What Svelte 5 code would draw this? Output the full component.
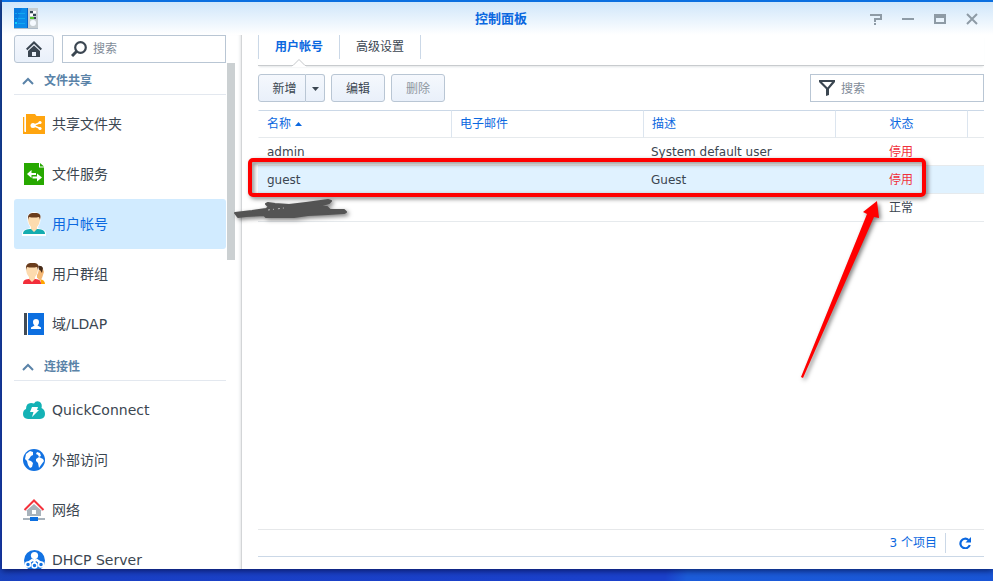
<script lang="ts">
	interface NavItem {
		id: string;
		label: string;
	}

	interface NavGroup {
		title: string;
		items: NavItem[];
	}

	interface User {
		name: string;
		email: string;
		description: string;
		disabled: boolean;
	}

	const groups: NavGroup[] = [
		{
			title: '文件共享',
			items: [
				{ id: 'share', label: '共享文件夹' },
				{ id: 'fileservice', label: '文件服务' },
				{ id: 'user', label: '用户帐号' },
				{ id: 'group', label: '用户群组' },
				{ id: 'ldap', label: '域/LDAP' }
			]
		},
		{
			title: '连接性',
			items: [
				{ id: 'quickconnect', label: 'QuickConnect' },
				{ id: 'external', label: '外部访问' },
				{ id: 'network', label: '网络' },
				{ id: 'dhcp', label: 'DHCP Server' }
			]
		}
	];

	const users: User[] = [
		{ name: 'admin', email: '', description: 'System default user', disabled: true },
		{ name: 'guest', email: '', description: 'Guest', disabled: true },
		{ name: '', email: '', description: '', disabled: false }
	];

	const tabs = ['用户帐号', '高级设置'];

	let activeItem = $state('user');
	let activeTab = $state(0);
	let selected = $state(1);
</script>

{#snippet navIcon(id: string)}
	<svg class="nav-icon" width="24" height="24" viewBox="0 0 24 24" aria-hidden="true">
		{#if id === 'share'}
			<path fill="#ffa510" d="M1 5h1.500v15H4V2h9l1.500 2H23v18H1z" />
			<path fill="#fff" d="M2.500 5H4v14H2.500z" />
			<path stroke="#fff" stroke-width="1.600" fill="none" d="M18.500 10.500 11 13.500l7.500 3" />
			<circle cx="18" cy="10.500" r="1.600" fill="#fff" />
			<circle cx="11" cy="13.500" r="2.500" fill="#fff" />
			<circle cx="18" cy="16.500" r="1.600" fill="#fff" />
		{:else if id === 'fileservice'}
			<path fill="#27a800" d="M2 1h15v4.500h5V23H2zM18 1l4 3.500h-4z" />
			<path fill="#fff" d="M9.500 8v3H14v2H9.500v3L5 12zM15 11.500l5 4-5 4v-3h-4.500v-2H15z" />
		{:else if id === 'user'}
			<path fill="#fff" d="M5 6Q6 0 12 0t7 6l-1 5-2 4v1l6 2 2 2v4H0v-4l2-2 6-2v-1l-2-4z" />
			<path fill="#14acb0" d="M1 22c0-3 2-4.500 7-5h8c5 .5 7 2 7 5z" />
			<path fill="#fddbae" d="M7 5q5-3 10 0l1 3-1 4-2 3v2l-3 3-3-3v-2l-2-3-1-4z" />
			<path fill="#6a3c1c" d="M6 8q-1-6 4-7h5q5 1 3 7l-1-3q-5 1-10 0z" />
		{:else if id === 'group'}
			<path fill="#ffa500" d="M16 22h7q0-4-5-5z" />
			<path fill="#f5b874" d="M15 7h6l1 3-2 6-2 3-3-3z" />
			<path fill="#472b18" d="M15 4q5-1 6 2l-1 5-2-3-3-1z" />
			<path fill="#fff" d="M3 6Q4 0 10 0t7 7l-1 4-2 4 5 4v4H0v-5l6-3-2-4z" />
			<path fill="#f22e3a" d="M1 22c0-3 1-4.500 6-5h6c5 .5 6 2 6 5z" />
			<path fill="#fddbae" d="M5 5q5-3 10 0l1 3-1 4-2 3v2l-3 3-3-3v-2l-2-3-1-4z" />
			<path fill="#6a3c1c" d="M4 8Q3 2 8 1h5q5 1 3 7l-1-3Q10 6 5 5z" />
		{:else if id === 'ldap'}
			<path fill="#414b55" d="M2 1h3v22H2z" />
			<path fill="#0d6fe0" d="M6 1h16v22H6z" />
			<path fill="#fff" d="M14 7q3 0 3 3t-1.500 3.500l3.500 2V17H9v-1.500l3.500-2Q11 13 11 10t3-3z" />
		{:else if id === 'quickconnect'}
			<path fill="#14b2b5" d="M6 21q-5-.5-5-5 0-4 3-5 0-6 5-6 2 0 3 .5Q14 2 18 4q2.500 2 1.500 6 3.500 1.500 3.500 6 0 4.500-5 5z" />
			<path fill="#fff" d="M10 9h6l-1 3h2l-7 7 1.500-5H8z" />
		{:else if id === 'external'}
			<circle cx="12" cy="12" r="11" fill="#1272e2" />
			<path
				fill="#fff"
				d="m4 6 4-3 3 1v3L9 8l-2 3-1 1 3 1 2 2-1 4-2 1-2-3-1-4-2-2zM15 4l3 1 1 3-2 1-1-2-2-1zM14 11l3-2 4 2 1 2-3 4-2 3-1-5-2-2z"
			/>
		{:else if id === 'network'}
			<path fill="#a8b2bb" d="m12 6 8 7h-1v5H5v-5H4zM1 20h22v2H1z" />
			<path fill="none" stroke="#f4313b" stroke-width="2" d="M2.500 12 12 2.500l9.500 9.500" />
			<path fill="#fff" d="M10 12h4v4h-4z" />
			<path fill="#0d6fe0" d="M8 19h8v4H8z" />
		{:else}
			<circle cx="12.500" cy="12.500" r="10.500" fill="#1272e2" />
			<circle cx="12.500" cy="7.500" r="3.600" fill="#fff" />
			<path fill="none" stroke="#fff" stroke-width="2.500" d="M12.500 9v6M11 11.500l-5 3.500m8-3.500 5 3.500" />
			<g fill="#1272e2" stroke="#fff" stroke-width="1.500">
				<circle cx="6" cy="16.500" r="2.500" />
				<circle cx="12.500" cy="17.500" r="2.500" />
				<circle cx="19" cy="16.500" r="2.500" />
			</g>
		{/if}
	</svg>
{/snippet}

<div class="desktop">
	<div class="window">
		<header class="titlebar">
			<svg width="24" height="22" viewBox="0 0 24 22" aria-hidden="true">
				<path fill="#0b2f50" opacity=".3" d="M0 20h24v1H0z" />
				<path fill="#087be0" d="M0 0h14v20H0z" />
				<path fill="#0b8be9" d="M8 0h6v20H0z" />
				<path fill="#075fc6" d="M13 0h1v20h-1z" />
				<path fill="#c6ced2" d="M14 0h10v20H14z" />
				<path stroke="#13a8f0" d="M1 5.500h2m1 0h7M1 10.500h2m1 0h7M4 15.500h7" />
				<path fill="#12d2fa" d="M1 14h2v2H1z" />
				<path fill="#364755" d="M16 3h3v2h-3zm3 3h3v2h-3zm-3 3h0z" />
				<path fill="#fff" d="M19 3h3v2h-3zm-3 3h3v2h-3z" />
				<path fill="#52c52a" d="M16 9h4v2h-4z" />
				<path fill="#364755" d="M20 9h2v2h-2z" />
				<circle cx="19" cy="15" r="3" fill="#f5faff" />
			</svg>
			<h1>控制面板</h1>
			<div class="controls">
				<button aria-label="帮助">
					<svg width="12" height="12" viewBox="0 0 12 12"><path fill="none" stroke="#8e9ba6" stroke-width="2" d="M1 3V2h10v4H5v3m0 1v2" /></svg>
				</button>
				<button aria-label="最小化">
					<svg width="12" height="12" viewBox="0 0 12 12"><path fill="#8e9ba6" d="M0 5h12v2H0z" /></svg>
				</button>
				<button aria-label="最大化">
					<svg width="12" height="12" viewBox="0 0 12 12"><path fill="#8e9ba6" fill-rule="evenodd" d="M0 1h12v10H0zm2 4v4h8V5z" /></svg>
				</button>
				<button aria-label="关闭">
					<svg width="12" height="12" viewBox="0 0 12 12"><path stroke="#8e9ba6" stroke-width="2" d="m1 1 10 10M11 1 1 11" /></svg>
				</button>
			</div>
		</header>

		<div class="body">
			<aside class="sidebar">
				<div class="side-tools">
					<button class="btn home" aria-label="主页">
						<svg width="16" height="16" viewBox="0 0 16 16">
							<path fill="none" stroke="#3b4651" stroke-width="2" d="M.7 8.500 8 1.500l7.300 7" />
							<path fill="#3b4651" fill-rule="evenodd" d="m8 4.500 6 5.500v6H2v-6zM6 11v4h4v-4z" />
						</svg>
					</button>
					<label class="field">
						<svg width="16" height="16" viewBox="0 0 16 16" aria-hidden="true">
							<circle cx="9.500" cy="6.500" r="5.300" fill="none" stroke="#3b4651" stroke-width="2.200" />
							<path stroke="#3b4651" stroke-width="3" d="m5.500 10.500-4.500 4.500" />
						</svg>
						<input type="text" placeholder="搜索" aria-label="搜索设置" />
					</label>
				</div>
				<div class="side-scroll">
					<nav>
						{#each groups as group (group.title)}
							<h2>
								<svg width="12" height="8" viewBox="0 0 12 8" aria-hidden="true">
									<path fill="none" stroke="#5a83a8" stroke-width="2" d="m1 7 5-5 5 5" />
								</svg>
								{group.title}
							</h2>
							<ul>
								{#each group.items as item (item.id)}
									<li>
										<button
											class="nav-item"
											class:active={activeItem === item.id}
											onclick={() => (activeItem = item.id)}
										>
											{@render navIcon(item.id)}
											{item.label}
										</button>
									</li>
								{/each}
							</ul>
						{/each}
					</nav>
					<div class="track"><div class="thumb"></div></div>
				</div>
			</aside>

			<main>
				<div class="tabs" role="tablist">
					{#each tabs as tab, i (tab)}
						<button
							role="tab"
							aria-selected={activeTab === i}
							class:active={activeTab === i}
							onclick={() => (activeTab = i)}
						>
							{tab}
							{#if activeTab === i}
								<svg class="notch" width="14" height="8" viewBox="0 0 14 8" aria-hidden="true">
									<path fill="#fff" d="M0 8V7l7-6 7 6v1z" />
									<path fill="none" stroke="#c4c7ca" d="M0 6.500h1l6-6 6 6h1" />
								</svg>
							{/if}
						</button>
					{/each}
				</div>

				<div class="toolbar">
					<div class="split">
						<button class="btn">新增</button>
						<button class="btn arrow" aria-label="更多">
							<svg width="7" height="4" viewBox="0 0 7 4"><path fill="#3b4651" d="M0 0h7L3.500 4z" /></svg>
						</button>
					</div>
					<button class="btn">编辑</button>
					<button class="btn" disabled>删除</button>
					<label class="field filter">
						<svg width="16" height="16" viewBox="0 0 16 16" aria-hidden="true">
							<path fill="#3b4651" fill-rule="evenodd" d="M0 0h16v2L10 9v6l-3 1V9L0 2zm3 2 5.500 5.500L13 2z" />
						</svg>
						<input type="text" placeholder="搜索" aria-label="搜索用户" />
					</label>
				</div>

				<div class="grid">
					<table>
						<colgroup>
							<col class="c-name" />
							<col class="c-text" />
							<col />
							<col class="c-status" />
							<col class="c-end" />
						</colgroup>
						<thead>
							<tr>
								<th>
									名称
									<svg width="7" height="4" viewBox="0 0 7 4" aria-hidden="true"><path fill="#0b68e0" d="M0 4h7L3.500 0z" /></svg>
								</th>
								<th>电子邮件</th>
								<th>描述</th>
								<th class="status">状态</th>
								<th></th>
							</tr>
						</thead>
						<tbody>
							{#each users as user, i (i)}
								<tr class:selected={selected === i} onclick={() => (selected = i)}>
									<td>{user.name}</td>
									<td>{user.email}</td>
									<td>{user.description}</td>
									<td class="status" class:disabled={user.disabled}>{user.disabled ? '停用' : '正常'}</td>
									<td></td>
								</tr>
							{/each}
						</tbody>
					</table>
				</div>

				<footer>
					<span>{users.length} 个项目</span>
					<button aria-label="刷新">
						<svg width="12" height="12" viewBox="0 0 12 12">
							<path fill="none" stroke="#0b68e0" stroke-width="2.200" d="M9.500 3A4.800 4.800 0 1 0 10.800 8" />
							<path fill="#0b68e0" d="M12 0v5.500H6.500z" />
						</svg>
					</button>
				</footer>
			</main>
		</div>
	</div>

	<!-- Markup drawn over the window: scribble, frame and arrow -->
	<svg class="marks" aria-hidden="true">
		<path
			fill="#545454"
			stroke="#545454"
			stroke-width="2"
			stroke-linejoin="round"
			d="m235 213 17-2 14-2 3-2-3-3 2-1 7 1 14 1 17-2 22-3 3 1-2 2-10 3 8 1 3 3h14l2 2-2 1-16 1-20 1-14 2h-28l-2-2-18 1-8 1z"
		/>
		<path stroke="#bbb" stroke-dasharray="2 3 1 4" d="m268 210 16-2" />
		<rect x="250" y="160" width="674" height="35" rx="3" fill="none" stroke="#f00" stroke-width="4" />
		<path fill="#f00" d="m877 201-14 11 4 2-66 163 2 1 71-161 5 1z" />
	</svg>
</div>

<style>
	:global(body) {
		margin: 0;
	}

	.desktop {
		position: relative;
		box-sizing: border-box;
		height: 100vh;
		padding: 0 0 12px 2px;
		overflow: hidden;
		background: linear-gradient(100deg, #174a9f 0%, #1a40c4 12%, #1b41cc 70%, #1c5cda 72%, #1955d6 100%);
		color: #3b4651;
		font: 12px/18px 'DejaVu Sans', 'Noto Sans CJK SC', sans-serif;
	}

	.window {
		display: flex;
		flex-direction: column;
		box-sizing: border-box;
		height: 100%;
		border-top: 2px solid #0b6fe0;
		background: #fff;
		box-shadow: 0 2px 6px rgba(0, 0, 40, 0.6);
	}

	button {
		padding: 0;
		border: 0;
		background: none;
		color: inherit;
		font: inherit;
		cursor: pointer;
	}

	svg {
		flex: none;
	}

	.titlebar {
		display: grid;
		grid-template-columns: 1fr auto 1fr;
		align-items: center;
		flex: none;
		height: 33px;
		padding: 0 5px 0 12px;
		background: linear-gradient(#cfe6fa, #fff);
	}

	h1 {
		margin: 0;
		color: #0b68e0;
		font-size: 13px;
		font-weight: bold;
	}

	.controls {
		display: flex;
		justify-content: flex-end;
	}

	.controls button {
		display: grid;
		place-items: center;
		width: 32px;
		height: 24px;
	}

	.body {
		display: flex;
		flex: 1;
		min-height: 0;
	}

	.sidebar {
		display: flex;
		flex-direction: column;
		flex: none;
		box-sizing: border-box;
		width: 240px;
		padding: 0 6px 0 12px;
		border-right: 1px solid #d3d5d7;
		box-shadow: inset -3px 0 3px -2px #e3e5e7;
	}

	.side-tools {
		display: flex;
		gap: 8px;
		padding-right: 9px;
	}

	.btn {
		box-sizing: border-box;
		height: 28px;
		min-width: 54px;
		border: 1px solid #b9c6d4;
		border-radius: 3px;
		background: linear-gradient(#f5f8fd, #e9f0fa);
	}

	.btn:disabled {
		color: #8d969f;
	}

	.home {
		display: grid;
		place-items: center;
		min-width: 40px;
	}

	.field {
		display: flex;
		align-items: center;
		flex: 1;
		gap: 6px;
		box-sizing: border-box;
		min-width: 0;
		height: 28px;
		padding: 0 8px;
		border: 1px solid #b9c6d4;
		background: #fff;
	}

	.field input {
		flex: 1;
		min-width: 0;
		padding: 0;
		border: 0;
		outline: 0;
		background: none;
		color: inherit;
		font: inherit;
	}

	.field input::placeholder {
		color: #7f8b98;
		opacity: 1;
	}

	.side-scroll {
		display: flex;
		flex: 1;
		gap: 1px;
		min-height: 0;
	}

	nav {
		flex: 1;
		overflow: hidden;
	}

	h2 {
		display: flex;
		align-items: center;
		gap: 10px;
		box-sizing: border-box;
		height: 32px;
		margin: 0 0 4px;
		padding: 5px 8px 0;
		border-bottom: 1px solid #e3e8ef;
		color: #5a83a8;
		font-size: 12px;
		font-weight: bold;
	}

	ul {
		margin: 0;
		padding: 0;
		list-style: none;
	}

	.nav-item {
		display: flex;
		align-items: center;
		gap: 6px;
		width: 100%;
		height: 50px;
		padding: 0 8px;
		border-radius: 3px;
		font-size: 14px;
		text-align: left;
	}

	.nav-item.active {
		background: #d1ebff;
		color: #0b68e0;
	}

	.track {
		width: 8px;
	}

	.thumb {
		height: 39%;
		background: #cbd0d2;
	}

	main {
		display: flex;
		flex-direction: column;
		flex: 1;
		min-width: 0;
		padding: 0 9px 12px 16px;
	}

	.tabs {
		display: flex;
		flex: none;
		margin-bottom: 8px;
		padding-bottom: 6px;
		border-bottom: 1px solid #c8cbce;
		box-shadow: 0 2px 2px -1px #e4e6e8;
	}

	.tabs button {
		position: relative;
		height: 24px;
		padding: 0 16px;
		border-right: 1px solid #cbd8e7;
	}

	.tabs button:first-child {
		border-left: 1px solid #cbd8e7;
	}

	.tabs .active {
		color: #0b68e0;
		font-weight: bold;
	}

	.notch {
		position: absolute;
		top: 24px;
		left: calc(50% - 7px);
	}

	.toolbar {
		display: flex;
		flex: none;
		gap: 6px;
		margin-bottom: 8px;
	}

	.toolbar .btn,
	.toolbar input {
		padding-top: 2px;
	}

	.split {
		display: flex;
	}

	.split .btn:first-child {
		min-width: 48px;
		padding-left: 5px;
		border-radius: 3px 0 0 3px;
	}

	.split .arrow {
		display: grid;
		place-items: center;
		min-width: 19px;
		border-left: 0;
		border-radius: 0 3px 3px 0;
	}

	.filter {
		flex: 0 0 174px;
		margin-left: auto;
	}

	.grid {
		flex: 1;
		min-height: 0;
		overflow: hidden;
	}

	table {
		width: 100%;
		border-collapse: separate;
		border-spacing: 0;
		table-layout: fixed;
	}

	.c-name {
		width: 193px;
	}

	.c-text {
		width: 192px;
	}

	.c-status {
		width: 132px;
	}

	.c-end {
		width: 17px;
	}

	th,
	td {
		box-sizing: border-box;
		height: 28px;
		padding: 0 8px;
		border-bottom: 1px solid #e6eaed;
		text-align: left;
	}

	th {
		border-top: 1px solid #cbd8e7;
		border-left: 1px solid #dce5ef;
		color: #0b68e0;
		font-weight: normal;
	}

	th:first-child {
		border-left-color: transparent;
	}

	td:first-child {
		padding-left: 9px;
	}

	th svg {
		vertical-align: 2px;
	}

	.status {
		text-align: center;
	}

	.disabled {
		color: #f0323c;
	}

	.selected td {
		background: #e0f2ff;
	}

	footer {
		display: flex;
		align-items: center;
		justify-content: flex-end;
		flex: none;
		box-sizing: border-box;
		height: 28px;
		border-top: 1px solid #e6e8ea;
		border-bottom: 1px solid #cbd8e7;
		color: #0b68e0;
	}

	footer button {
		display: grid;
		place-items: center;
		width: 39px;
		height: 20px;
		margin-left: 8px;
		border-left: 1px solid #cbd8e7;
	}

	.marks {
		position: absolute;
		top: 0;
		left: 0;
		width: 100%;
		height: 100%;
		filter: drop-shadow(2px 2px 2px rgba(0, 0, 0, 0.5));
		pointer-events: none;
	}
</style>
